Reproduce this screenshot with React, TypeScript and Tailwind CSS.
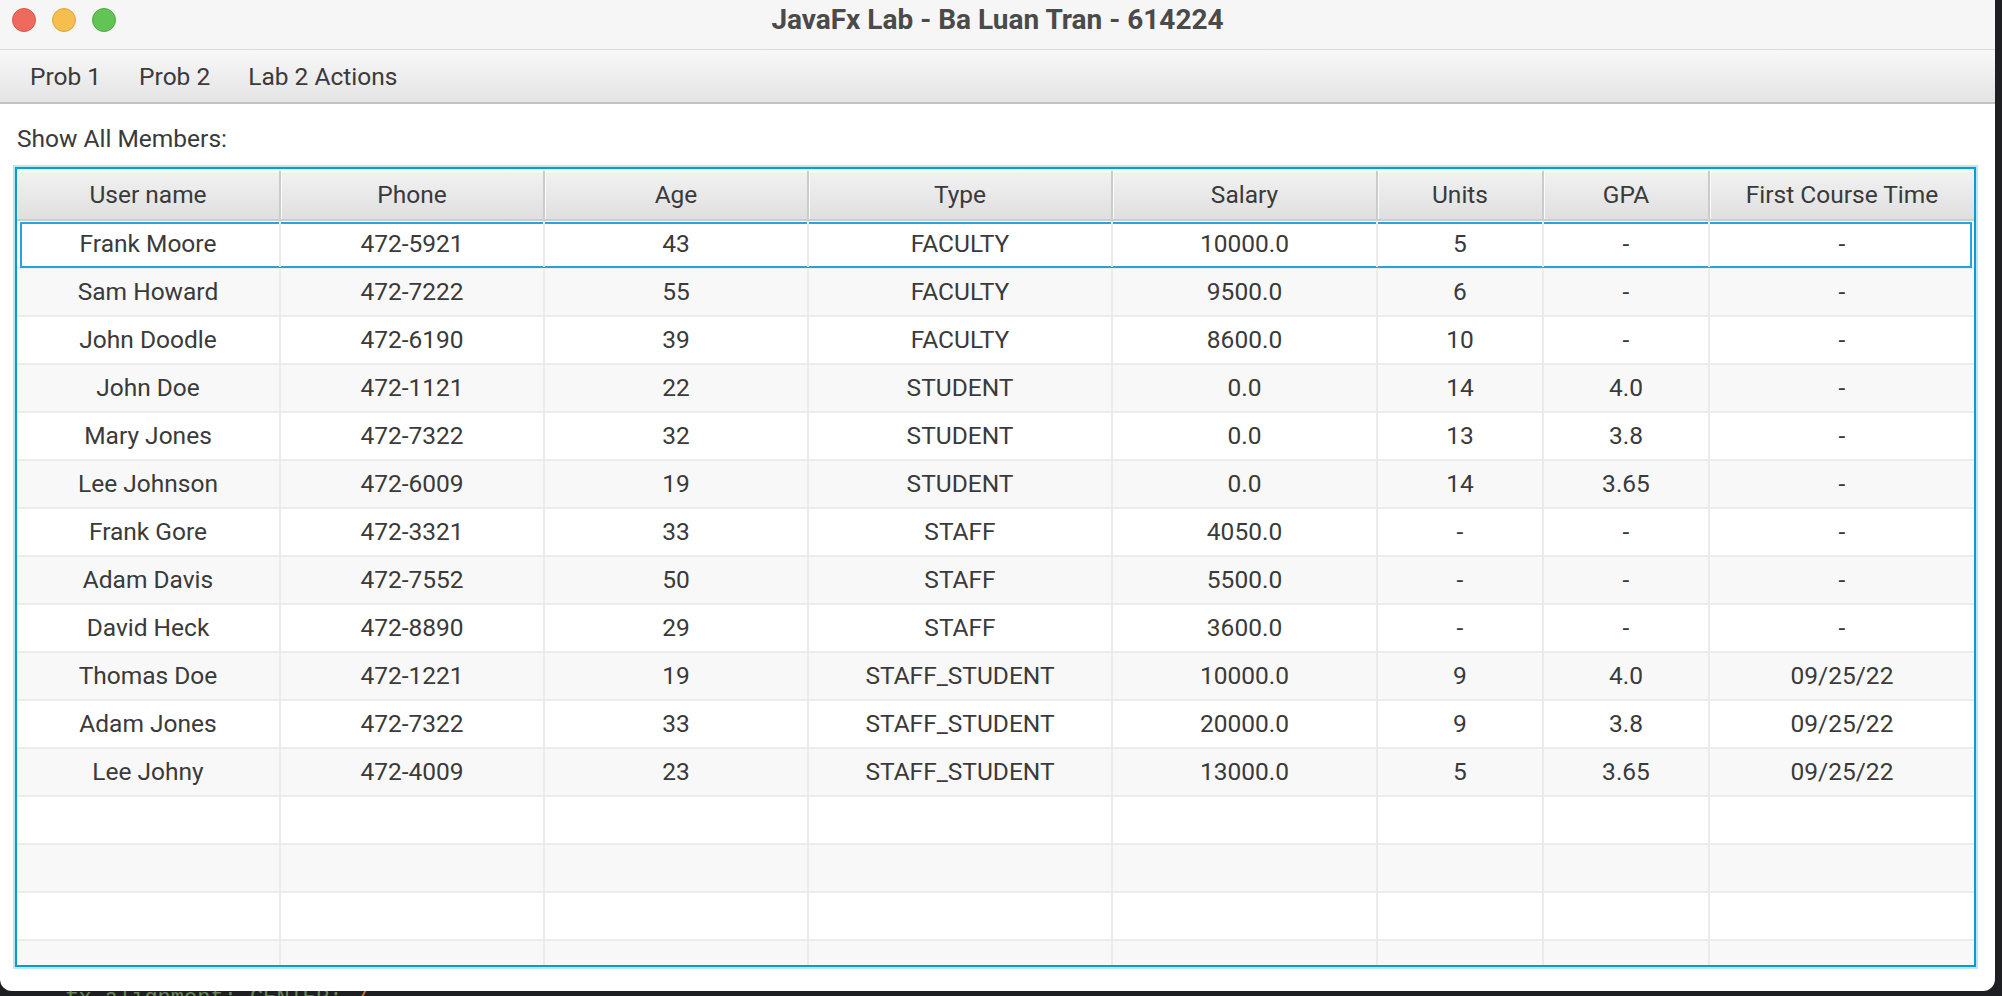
import * as React from 'react';

/** One member row in the "Show All Members" table. */
interface Member {
  name: string;
  phone: string;
  age: string;
  type: string;
  salary: string;
  units: string;
  gpa: string;
  firstCourse: string;
}

const members: Member[] = [
  { name: 'Frank Moore', phone: '472-5921', age: '43', type: 'FACULTY', salary: '10000.0', units: '5', gpa: '-', firstCourse: '-' },
  { name: 'Sam Howard', phone: '472-7222', age: '55', type: 'FACULTY', salary: '9500.0', units: '6', gpa: '-', firstCourse: '-' },
  { name: 'John Doodle', phone: '472-6190', age: '39', type: 'FACULTY', salary: '8600.0', units: '10', gpa: '-', firstCourse: '-' },
  { name: 'John Doe', phone: '472-1121', age: '22', type: 'STUDENT', salary: '0.0', units: '14', gpa: '4.0', firstCourse: '-' },
  { name: 'Mary Jones', phone: '472-7322', age: '32', type: 'STUDENT', salary: '0.0', units: '13', gpa: '3.8', firstCourse: '-' },
  { name: 'Lee Johnson', phone: '472-6009', age: '19', type: 'STUDENT', salary: '0.0', units: '14', gpa: '3.65', firstCourse: '-' },
  { name: 'Frank Gore', phone: '472-3321', age: '33', type: 'STAFF', salary: '4050.0', units: '-', gpa: '-', firstCourse: '-' },
  { name: 'Adam Davis', phone: '472-7552', age: '50', type: 'STAFF', salary: '5500.0', units: '-', gpa: '-', firstCourse: '-' },
  { name: 'David Heck', phone: '472-8890', age: '29', type: 'STAFF', salary: '3600.0', units: '-', gpa: '-', firstCourse: '-' },
  { name: 'Thomas Doe', phone: '472-1221', age: '19', type: 'STAFF_STUDENT', salary: '10000.0', units: '9', gpa: '4.0', firstCourse: '09/25/22' },
  { name: 'Adam Jones', phone: '472-7322', age: '33', type: 'STAFF_STUDENT', salary: '20000.0', units: '9', gpa: '3.8', firstCourse: '09/25/22' },
  { name: 'Lee Johny', phone: '472-4009', age: '23', type: 'STAFF_STUDENT', salary: '13000.0', units: '5', gpa: '3.65', firstCourse: '09/25/22' },
];

/** Column widths include the 2px right separator; the last one fills the rest. */
const columns = [
  { title: 'User name', width: 'w-[264px] border-r-2' },
  { title: 'Phone', width: 'w-[264px] border-r-2' },
  { title: 'Age', width: 'w-[264px] border-r-2' },
  { title: 'Type', width: 'w-[304px] border-r-2' },
  { title: 'Salary', width: 'w-[265px] border-r-2' },
  { title: 'Units', width: 'w-[166px] border-r-2' },
  { title: 'GPA', width: 'w-[166px] border-r-2' },
  { title: 'First Course Time', width: 'flex-1' },
];

function cellsOf(m: Member) {
  return [m.name, m.phone, m.age, m.type, m.salary, m.units, m.gpa, m.firstCourse];
}

function TitleBar() {
  return (
    <div className="grid h-[50px] shrink-0 grid-cols-[1fr_auto_1fr] border-b border-[#dadada] bg-[#f6f6f6]">
      <div className="flex items-start gap-[16px] pl-[12px] pt-[8px]">
        <span className="h-[24px] w-[24px] rounded-full border border-[#d9574b] bg-[#ee6a5f]" />
        <span className="h-[24px] w-[24px] rounded-full border border-[#dea53a] bg-[#f5be4f]" />
        <span className="h-[24px] w-[24px] rounded-full border border-[#52a945] bg-[#61c454]" />
      </div>
      <div className="flex h-[40px] items-center text-[28px] font-bold text-[#4a4a4a]">
        JavaFx Lab - Ba Luan Tran - 614224
      </div>
      <div />
    </div>
  );
}

function MenuBar() {
  return (
    <div className="flex h-[54px] shrink-0 items-center border-b-2 border-[#c2c2c2] bg-gradient-to-b from-[#f8f8f8] to-[#e4e4e4] pl-[11px] pt-[2px] text-[24.5px] text-[#3a3a3a]">
      {['Prob 1', 'Prob 2', 'Lab 2 Actions'].map((label) => (
        <span key={label} className="px-[19px]">
          {label}
        </span>
      ))}
    </div>
  );
}

function HeaderRow() {
  return (
    <div className="flex h-[52px] shrink-0 border-b-2 border-[#cdcdcd] bg-gradient-to-b from-[#f3f3f3] to-[#dfdfdf] pt-[2px]">
      {columns.map((c) => (
        <div
          key={c.title}
          className={`${c.width} flex items-center justify-center border-[#cbcbcb] shadow-[inset_1px_1px_0_#fbfbfb]`}
        >
          {c.title}
        </div>
      ))}
    </div>
  );
}

function DataRow({ values, index }: { values: string[]; index: number }) {
  const focused = index === 0;
  return (
    <div
      className={`relative flex h-[48px] shrink-0 border-b-2 border-[#ececec] ${
        index % 2 === 0 ? 'bg-white' : 'bg-[#f8f8f8]'
      }`}
    >
      {focused && (
        <div className="pointer-events-none absolute top-[1px] bottom-[-1px] left-[3px] right-[2px] border-2 border-[#2ba3d8]" />
      )}
      {columns.map((c, i) => (
        <div
          key={c.title}
          className={`${c.width} relative z-10 flex items-center justify-center border-[#ebebeb]`}
        >
          {values[i]}
        </div>
      ))}
    </div>
  );
}

function MembersTable() {
  const empty = ['', '', '', '', '', '', '', ''];
  return (
    <div className="flex h-[800px] w-[1961px] flex-col overflow-hidden border-2 border-[#0b9bd3] shadow-[0_0_0_2px_#bfe5f4]">
      <HeaderRow />
      {members.map((m, i) => (
        <DataRow key={m.name} values={cellsOf(m)} index={i} />
      ))}
      {[12, 13, 14, 15, 16].map((i) => (
        <DataRow key={i} values={empty} index={i} />
      ))}
    </div>
  );
}

export default function App() {
  return (
    <div className="flex h-[996px] w-[2002px] flex-col overflow-hidden bg-[#1e1f22] font-['Roboto',sans-serif] text-[24.5px] text-[#3a3a3a]">
      <div className="flex h-[991px] w-[1995px] shrink-0 flex-col overflow-hidden rounded-br-[12px] rounded-bl-[12px] bg-white">
        <TitleBar />
        <MenuBar />
        <div className="flex flex-col pl-[15px]">
          <div className="flex h-[63px] items-center pl-[2px] pt-[8px] text-[24.5px]">
            Show All Members:
          </div>
          <MembersTable />
        </div>
      </div>
      <div className="h-[5px] overflow-hidden pl-[52px] font-['Liberation_Mono',monospace] text-[22px] leading-[22px] text-[#6a8759]">
        <span className="-mt-[3px] block">-fx-alignment: CENTER; <span className="text-[#cc7832]">/</span></span>
      </div>
    </div>
  );
}
